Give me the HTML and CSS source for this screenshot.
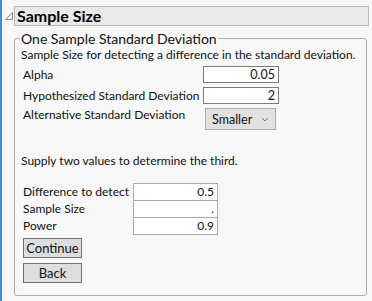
FILE: index.html
```html
<!DOCTYPE html>
<html lang="en">
<head>
  <meta charset="UTF-8" />
  <title>Sample Size</title>
  <link rel="stylesheet" href="styles.css">
</head>
<body>

  <div class="outline-head">
    <span class="toggle">
      <svg width="10" height="10" viewBox="0 0 10 10"><path d="M8.5 1.5 L8.5 8.5 L1.5 8.5 Z" fill="none" stroke="#8a8a8a" stroke-width="1"/></svg>
    </span>
    <div class="title">Sample Size</div>
  </div>

  <fieldset class="group">
    <legend>One Sample Standard Deviation</legend>
    <p class="desc">Sample Size for detecting a difference in the standard deviation.</p>

    <div class="params">
      <label>Alpha</label>
      <div class="num">0.05</div>
      <label>Hypothesized Standard Deviation</label>
      <div class="num">2</div>
      <label class="top">Alternative Standard Deviation</label>
      <div class="combo">
        <span>Smaller</span>
        <svg width="8" height="5" viewBox="0 0 8 5"><path d="M1 1 L4 4 L7 1" fill="none" stroke="#777" stroke-width="1"/></svg>
      </div>
    </div>

    <p class="hint">Supply two values to determine the third.</p>

    <div class="solve">
      <label>Difference to detect</label>
      <div class="cell">0.5</div>
      <label>Sample Size</label>
      <div class="cell">.</div>
      <label>Power</label>
      <div class="cell">0.9</div>
    </div>

    <div class="buttons">
      <button>Continue</button>
      <button>Back</button>
    </div>
  </fieldset>

</body>
</html>
```

FILE: styles.css
```css
* {
  margin: 0;
  box-sizing: border-box;
}

body {
  font-family: Lato, "Liberation Sans", sans-serif;
  font-size: 12px;
  color: #111;
  background: #f7f7f7;
  border-left: 2px solid #3b8de0;
  height: 301px;
  overflow: hidden;
  padding-top: 6px;
  white-space: nowrap;
}

.outline-head {
  display: flex;
  align-items: center;
  margin-right: 3px;
}

.toggle {
  width: 12px;
  display: flex;
  justify-content: center;
  padding-left: 1px;
}

.title {
  flex: 1;
  height: 20px;
  background: #e9e9e9;
  border: 1px solid #b8b8b8;
  font-weight: bold;
  font-size: 16px;
  line-height: 17px;
  padding-left: 2px;
  color: #000;
}

.group {
  margin: 5px 5px 0 12px;
  padding: 0 6px 12px 6px;
  border: 1px solid #adadad;
  border-radius: 3px;
  min-width: 0;
}

.group legend {
  font-size: 14px;
  line-height: 15px;
  padding: 0 1px;
  margin-left: -1px;
  color: #111;
}

.desc {
  line-height: 16px;
  margin-top: 1px;
}

.params {
  display: grid;
  grid-template-columns: 180px 76px;
  row-gap: 4px;
  margin-top: 3px;
  padding-left: 2px;
}

.params label {
  display: flex;
  align-items: center;
}

.params label.top {
  align-items: flex-start;
  margin-top: -1px;
}

.num {
  height: 17px;
  background: #fff;
  border: 1px solid #7a7a7a;
  text-align: right;
  padding-right: 3px;
  line-height: 15px;
  font-size: 12.5px;
}

.combo {
  margin-left: 2px;
  width: 71px;
  height: 22px;
  background: #e1e1e1;
  border: 1px solid #adadad;
  display: flex;
  align-items: center;
  justify-content: space-between;
  padding: 0 6px 0 6px;
  font-size: 12.5px;
}

.hint {
  margin-top: 23px;
  line-height: 16px;
}

.solve {
  display: grid;
  grid-template-columns: 110px 85px;
  margin-top: 14px;
  padding-left: 2px;
}

.solve label {
  display: flex;
  align-items: center;
  height: 17px;
}

.cell {
  height: 18px;
  margin-bottom: -1px;
  background: #fff;
  border: 1px solid #aaa;
  text-align: right;
  padding-right: 3px;
  line-height: 16px;
}

.buttons {
  display: flex;
  flex-direction: column;
  gap: 5px;
  margin-top: 4px;
  padding-left: 2px;
}

.buttons button {
  width: 59px;
  height: 20px;
  font-family: inherit;
  font-size: 13px;
  padding: 0;
  line-height: 18px;
  background: #dddddd;
  border: 1px solid #707070;
  color: #111;
}
```
